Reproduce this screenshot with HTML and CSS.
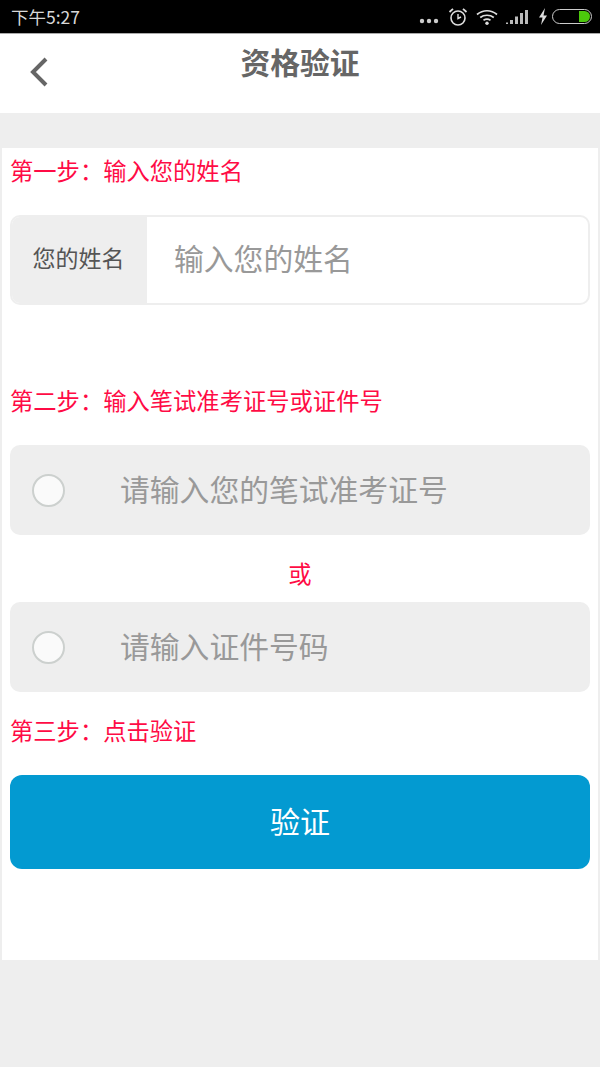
FILE: index.html
```html
<!DOCTYPE html>
<html lang="zh-CN">
<head>
<meta charset="utf-8">
<title>资格验证</title>
<link rel="stylesheet" href="styles.css">
</head>
<body>
<div class="statusbar">
  <span class="time">下午5:27</span>
  <div class="status-icons">
    <svg class="ic-dots" width="20" height="6" viewBox="0 0 20 6"><circle cx="3" cy="3" r="2.2"/><circle cx="10" cy="3" r="2.2"/><circle cx="17" cy="3" r="2.2"/></svg>
    <svg class="ic-alarm" width="20" height="20" viewBox="0 0 20 20"><circle cx="10" cy="11" r="7" fill="none" stroke="#ddd" stroke-width="1.6"/><path d="M10 7v4.5l3-1.5" fill="none" stroke="#ddd" stroke-width="1.4"/><path d="M1.5 5 5 1.8M18.500 5 15 1.800" stroke="#ddd" stroke-width="1.800" fill="none"/></svg>
    <svg class="ic-wifi" width="22" height="16" viewBox="0 0 22 16"><path d="M1 5.500C7 .5 15 .5 21 5.500M4.200 8.500C8 5.500 14 5.500 17.800 8.500M7.500 11.300C9.500 10 12.500 10 14.500 11.300" fill="none" stroke="#ddd" stroke-width="1.700"/><circle cx="11" cy="14.200" r="1.700" fill="#ddd"/></svg>
    <svg class="ic-signal" width="22" height="16" viewBox="0 0 22 16"><path d="M0 15h2v-1.500H0zM4 15h3V11H4zM9 15h3V7.500H9zM14 15h3V4h-3zM19 15h3V1h-3z" fill="#bbb"/></svg>
    <svg class="ic-bolt" width="10" height="17" viewBox="0 0 10 17"><path d="M7 0 1 9.500h3.500L3 17l6-9.500H5.500z" fill="#ddd"/></svg>
    <div class="battery"><div class="battery-fill"></div></div>
  </div>
</div>
<header class="navbar">
  <svg class="back" width="20" height="32" viewBox="0 0 20 32"><path d="M17 3 4 16l13 13" fill="none" stroke="#666" stroke-width="4"/></svg>
  <h1 class="title">资格验证</h1>
</header>
<main class="card">
  <p class="step step-one">第一步<span class="colon">：</span>输入您的姓名</p>
  <div class="name-field">
    <div class="name-label"><span class="lift">您的姓名</span></div>
    <div class="name-input"><span class="lift">输入您的姓名</span></div>
  </div>
  <p class="step step-two">第二步<span class="colon">：</span>输入笔试准考证号或证件号</p>
  <div class="radio-field">
    <span class="radio"></span>
    <span class="radio-text">请输入您的笔试准考证号</span>
  </div>
  <p class="or">或</p>
  <div class="radio-field">
    <span class="radio"></span>
    <span class="radio-text">请输入证件号码</span>
  </div>
  <p class="step step-three">第三步<span class="colon">：</span>点击验证</p>
  <div class="submit">验证</div>
</main>
</body>
</html>
```

FILE: styles.css
```css
* { box-sizing: border-box; }
html, body { margin: 0; padding: 0; }
body {
  width: 600px;
  height: 1067px;
  overflow: hidden;
  background: #eeeeee;
  font-family: "Noto Sans CJK SC", "Noto Sans", sans-serif;
}
.statusbar {
  height: 34px;
  background: #000;
  border-bottom: 1px solid #aaa;
  display: flex;
  align-items: center;
  justify-content: space-between;
  padding: 0 8px 0 11px;
}
.time { color: #d8d8d8; font-size: 17.5px; line-height: 1; font-family: "Noto Sans CJK SC", Roboto, sans-serif; }
.status-icons { display: flex; align-items: center; }
.ic-dots { fill: #ccc; margin-top: 9px; margin-right: 9px; }
.ic-alarm { margin-right: 8px; }
.ic-wifi { margin-right: 8px; }
.ic-signal { margin-right: 10px; }
.ic-bolt { margin-right: 4px; }
.battery {
  width: 40px;
  height: 15px;
  border: 1px solid #ccc;
  border-radius: 8px;
  padding: 1px;
  display: flex;
  justify-content: flex-end;
}
.battery-fill { width: 11px; background: #4cc80c; border-radius: 0 6px 6px 0; }
.navbar {
  height: 79px;
  background: #fff;
  position: relative;
  display: flex;
  justify-content: center;
}
.back { position: absolute; left: 29px; top: 22px; }
.title {
  margin: 9px 0 0;
  font-size: 29.8px;
  line-height: 36px;
  font-weight: 700;
  color: #666;
}
.card {
  margin: 35px 2px 0;
  height: 812px;
  background: #fff;
  padding: 7px 8px 0;
}
.step {
  margin: 0;
  font-size: 23.3px;
  line-height: 30px;
  color: #ff0b45;
}
.colon { font-family: "Noto Sans CJK TC", sans-serif; }
.lift { position: relative; top: -3px; }
.name-field {
  margin-top: 30px;
  height: 90px;
  border: 2px solid #eee;
  border-radius: 10px;
  display: flex;
  overflow: hidden;
}
.name-label {
  width: 135px;
  padding-right: 2px;
  background: #eee;
  color: #555;
  font-size: 23px;
  display: flex;
  align-items: center;
  justify-content: center;
}
.name-input {
  flex: 1;
  padding-left: 27px;
  color: #999;
  font-size: 29.8px;
  display: flex;
  align-items: center;
}
.step-two { margin-top: 80px; }
.radio-field {
  height: 90px;
  background: #eee;
  border-radius: 10px;
  display: flex;
  align-items: center;
  padding-left: 22px;
}
.step-two + .radio-field { margin-top: 30px; }
.radio {
  width: 33px;
  height: 33px;
  border-radius: 50%;
  background: #fafafa;
  border: 2px solid #ccd0ce;
  flex: none;
}
.radio-text {
  margin-left: 55px;
  color: #999;
  font-size: 29.8px;
  line-height: 40px;
  margin-bottom: 5px;
}
.or {
  margin: 0;
  height: 67px;
  padding-top: 8px;
  display: flex;
  align-items: center;
  justify-content: center;
  color: #ff0b45;
  font-size: 23.3px;
}
.step-three { margin-top: 23px; }
.submit {
  margin-top: 30px;
  height: 94px;
  padding-bottom: 4px;
  border-radius: 12px;
  background: #039ad1;
  color: #fff;
  font-size: 30px;
  display: flex;
  align-items: center;
  justify-content: center;
}
```
